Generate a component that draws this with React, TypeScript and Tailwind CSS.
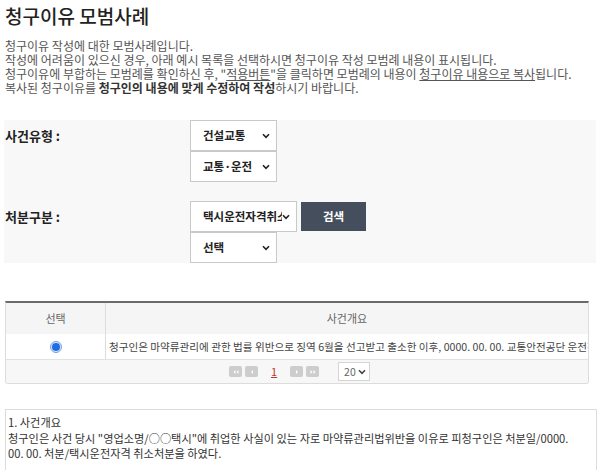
import React from "react";

const font = { fontFamily: '"Noto Sans CJK KR", "Noto Sans", sans-serif' };

function Chevron() {
  return (
    <svg width="8" height="6" viewBox="0 0 8 6" className="shrink-0">
      <path d="M1 1.2 L4 4.3 L7 1.2" fill="none" stroke="#222" strokeWidth="1.6" />
    </svg>
  );
}

function FakeSelect({ label, w }: { label: string; w: string }) {
  return (
    <div className={`flex h-[31px] ${w} items-center justify-between overflow-hidden border border-[#c9c9c9] bg-white pl-[12px] pr-[6px]`}>
      <span className="overflow-hidden whitespace-nowrap text-[11.5px] font-bold text-[#222]">{label}</span>
      <Chevron />
    </div>
  );
}

function PageBtn({ dir, double }: { dir: "l" | "r"; double?: boolean }) {
  const tri = (x: number) =>
    dir === "l" ? `M${x + 2} 2 L${x} 4 L${x + 2} 6 Z` : `M${x} 2 L${x + 2} 4 L${x} 6 Z`;
  return (
    <div className="flex h-[11px] w-[13px] items-center justify-center rounded-[2px] bg-[#cdcdcd]">
      <svg width="8" height="8" viewBox="0 0 8 8">
        {double ? (
          <>
            <path d={tri(1.5)} fill="#fff" />
            <path d={tri(4.5)} fill="#fff" />
          </>
        ) : (
          <path d={tri(3)} fill="#fff" />
        )}
      </svg>
    </div>
  );
}

export default function App() {
  return (
    <div className="h-[470px] w-[600px] overflow-hidden bg-white" style={font}>
      <h1 className="px-[5px] pt-[4px] text-[19px] font-medium leading-[24px] text-[#222]">청구이유 모범사례</h1>
      <div className="mt-[11px] px-[5px] text-[12px] leading-[14px] text-[#555]">
        <p>청구이유 작성에 대한 모범사례입니다.</p>
        <p>작성에 어려움이 있으신 경우, 아래 예시 목록을 선택하시면 청구이유 작성 모범례 내용이 표시됩니다.</p>
        <p>
          청구이유에 부합하는 모범례를 확인하신 후, "<span className="underline">적용버튼</span>"을 클릭하면 모범례의 내용이{" "}
          <span className="underline">청구이유 내용으로 복사</span>됩니다.
        </p>
        <p>
          복사된 청구이유를 <b className="text-[#333]">청구인의 내용에 맞게 수정하여 작성</b>하시기 바랍니다.
        </p>
      </div>

      <div className="mx-[4px] mt-[25px] flex flex-col gap-[19px] bg-[#f8f8f8] pl-[1px]">
        <div className="grid grid-cols-[185px_1fr]">
          <div className="flex h-[31px] items-center text-[13px] font-bold text-[#222]">사건유형 :</div>
          <div className="flex flex-col">
            <FakeSelect label="건설교통" w="w-[87px]" />
            <FakeSelect label="교통·운전" w="w-[87px]" />
          </div>
        </div>
        <div className="grid grid-cols-[185px_1fr]">
          <div className="flex h-[31px] items-center text-[13px] font-bold text-[#222]">처분구분 :</div>
          <div className="flex flex-col">
            <div className="flex items-center gap-[4px]">
              <FakeSelect label="택시운전자격취소" w="w-[107px]" />
              <div className="flex h-[29px] w-[65px] items-center justify-center bg-[#454e5c] text-[11.5px] font-bold text-white">
                검색
              </div>
            </div>
            <FakeSelect label="선택" w="w-[87px]" />
          </div>
        </div>
      </div>

      <div className="ml-[5px] mt-[38px] w-[584px] overflow-hidden rounded-b-[3px] border border-t-2 border-[#dcdcdc] border-t-[#6b6b6b] text-[10.6px]">
        <div className="grid h-[31px] grid-cols-[100px_1fr] bg-[#f5f5f5] text-[11px] text-[#666]">
          <div className="flex items-center justify-center border-r border-[#dcdcdc]">선택</div>
          <div className="flex items-center justify-center">사건개요</div>
        </div>
        <div className="grid h-[25px] grid-cols-[100px_1fr] bg-white text-[#444]">
          <div className="flex items-center justify-center border-r border-[#dcdcdc]">
            <div className="flex h-[12px] w-[12px] items-center justify-center rounded-full border border-[#7aa0d8] bg-[#dbe8fa]">
              <div className="h-[8px] w-[8px] rounded-full bg-[#1e6ee6]" />
            </div>
          </div>
          <div className="flex items-center overflow-hidden whitespace-nowrap pl-[3px]">
            청구인은 마약류관리에 관한 법률 위반으로 징역 6월을 선고받고 출소한 이후, 0000. 00. 00. 교통안전공단 운전적성정밀검사
          </div>
        </div>
        <div className="flex h-[24px] items-center border-t border-[#e2e2e2] bg-[#f7f7f7] pl-[223px]">
          <div className="flex items-center gap-[3px]">
            <PageBtn dir="l" double />
            <PageBtn dir="l" />
          </div>
          <span className="ml-[13px] mr-[13px] text-[11px] leading-none text-[#c0392b] underline">1</span>
          <div className="flex items-center gap-[3px]">
            <PageBtn dir="r" />
            <PageBtn dir="r" double />
          </div>
          <div className="ml-[19px] flex h-[19px] w-[32px] items-center justify-between border border-[#d5d5d5] bg-white pl-[5px] pr-[3px] text-[10.5px] text-[#666]">
            <span>20</span>
            <svg width="8" height="6" viewBox="0 0 8 6">
              <path d="M1 1.2 L4 4.3 L7 1.2" fill="none" stroke="#444" strokeWidth="1.5" />
            </svg>
          </div>
        </div>
      </div>

      <div className="ml-[5px] mt-[25px] h-[80px] w-[592px] border border-[#dcdcdc] px-[2px] pt-[5px] text-[11.2px] leading-[15.5px] text-[#333]">
        <p>1. 사건개요</p>
        <p>
          청구인은 사건 당시 "영업소명/○○택시"에 취업한 사실이 있는 자로 마약류관리법위반을 이유로 피청구인은 처분일/0000.
          <br />
          00. 00. 처분/택시운전자격 취소처분을 하였다.
        </p>
      </div>
    </div>
  );
}
